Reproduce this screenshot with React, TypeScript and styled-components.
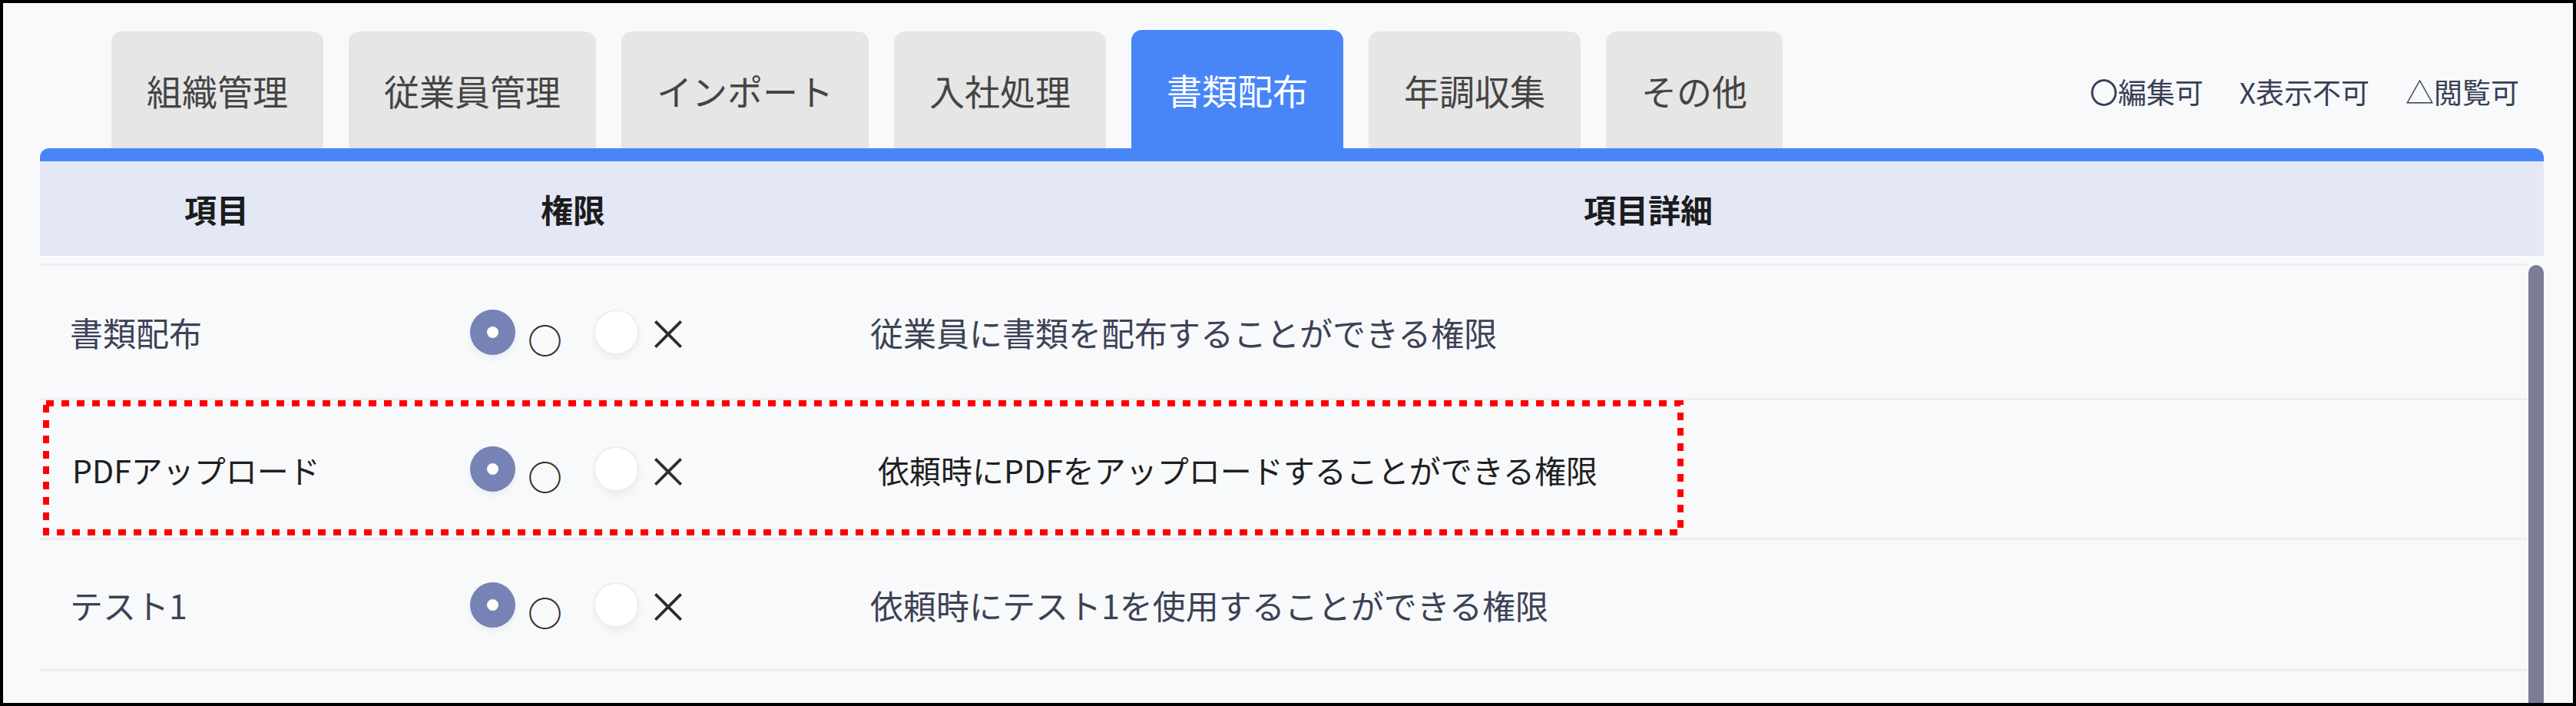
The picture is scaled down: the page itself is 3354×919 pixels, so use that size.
import * as React from 'react';
import styled, { createGlobalStyle } from 'styled-components';

const GlobalStyle = createGlobalStyle`
  html, body {
    margin: 0;
    padding: 0;
    background: #ffffff;
  }
  body {
    font-family: "Noto Sans CJK JP", "Noto Sans", sans-serif;
  }
`;

const Frame = styled.div`
  width: 3354px;
  height: 919px;
  box-sizing: border-box;
  border: 4px solid #000;
  background: #f8f9fb;
  padding: 35px 38px 0 48px;
  display: flex;
  flex-direction: column;
  overflow: hidden;
`;

const TopRow = styled.div`
  display: flex;
  align-items: flex-end;
  height: 154px;
  flex-shrink: 0;
`;

const TabList = styled.div`
  display: flex;
  align-items: flex-end;
  gap: 33px;
  margin-left: 93px;
  height: 100%;
`;

const Tab = styled.div<{ $active?: boolean }>`
  height: ${(p) => (p.$active ? 154 : 152)}px;
  padding: 0 46px;
  display: flex;
  align-items: center;
  justify-content: center;
  border-radius: 14px 14px 0 0;
  background: ${(p) => (p.$active ? '#4886f8' : '#e6e6e6')};
  color: ${(p) => (p.$active ? '#ffffff' : '#444444')};
  font-size: 46px;
  white-space: nowrap;
`;

const Legend = styled.div`
  margin-left: auto;
  margin-right: 32px;
  align-self: center;
  padding-top: 6px;
  display: flex;
  gap: 47px;
  font-size: 37px;
  color: #3a3f55;
  white-space: nowrap;
`;

const HeaderBar = styled.div`
  flex-shrink: 0;
  height: 140px;
  box-sizing: border-box;
  border-top: 17px solid #4886f8;
  border-radius: 12px 12px 0 0;
  background: #e4e8f6;
  display: grid;
  grid-template-columns: 460px 468px 1fr;
  align-items: center;
  text-align: center;
  font-size: 42px;
  font-weight: 700;
  color: #1c1c1c;
`;

const Body = styled.div`
  flex: 1;
  min-height: 0;
  margin-top: 10px;
  display: flex;
`;

const Rows = styled.div`
  flex: 1;
  display: flex;
  flex-direction: column;
`;

const Row = styled.div<{ $h: number }>`
  position: relative;
  height: ${(p) => p.$h}px;
  box-sizing: border-box;
  border-top: 3px solid #ecedf0;
  display: grid;
  grid-template-columns: 560px 521px 1fr;
  align-items: center;
  &:last-child {
    border-bottom: 3px solid #ecedf0;
  }
`;

const NameCell = styled.div<{ $edited?: boolean }>`
  padding-left: ${(p) => (p.$edited ? 42 : 39)}px;
  font-size: ${(p) => (p.$edited ? 41 : 43)}px;
  color: ${(p) => (p.$edited ? '#1f1f22' : '#3d4255')};
  white-space: nowrap;
`;

const PermCell = styled.div`
  display: flex;
  align-items: center;
`;

const Radio = styled.span<{ $checked?: boolean }>`
  position: relative;
  width: 59px;
  height: 59px;
  box-sizing: border-box;
  border-radius: 50%;
  background: ${(p) => (p.$checked ? '#7683b4' : '#ffffff')};
  border: ${(p) => (p.$checked ? 'none' : '2px solid #eeeeee')};
  box-shadow: 0 5px 10px rgba(0, 0, 0, 0.05);
  margin-left: ${(p) => (p.$checked ? 0 : 41)}px;
  &::after {
    content: '';
    display: ${(p) => (p.$checked ? 'block' : 'none')};
    position: absolute;
    left: 22px;
    top: 22px;
    width: 15px;
    height: 15px;
    border-radius: 50%;
    background: #ffffff;
  }
`;

const OptionLabel = styled.span<{ $shift: number }>`
  margin-left: 10px;
  margin-top: ${(p) => p.$shift}px;
  font-size: 56px;
  line-height: 1;
  color: #2e2e2e;
`;

const CircleMark = styled(OptionLabel)`
  margin-left: 16px;
  font-size: 45px;
  font-weight: 700;
  color: #333333;
`;

const DescCell = styled.div<{ $edited?: boolean }>`
  padding-left: ${(p) => (p.$edited ? 10 : 0)}px;
  font-size: ${(p) => (p.$edited ? 41 : 43)}px;
  color: ${(p) => (p.$edited ? '#1f1f22' : '#3d4255')};
  white-space: nowrap;
`;

const Highlight = styled.svg`
  position: absolute;
  left: 4px;
  top: 0;
  width: 2136px;
  height: 176px;
  pointer-events: none;
`;

const Scrollbar = styled.div`
  width: 20px;
  margin-left: 2px;
  margin-top: 2px;
  background: #7b7c96;
  border-radius: 10px 10px 0 0;
`;

const tabs = ['組織管理', '従業員管理', 'インポート', '入社処理', '書類配布', '年調収集', 'その他'];

const rows = [
  { name: '書類配布', desc: '従業員に書類を配布することができる権限', h: 175 },
  { name: 'PDFアップロード', desc: '依頼時にPDFをアップロードすることができる権限', h: 182, edited: true },
  { name: 'テスト1', desc: '依頼時にテスト1を使用することができる権限', h: 174 },
];

export default function App() {
  return (
    <>
      <GlobalStyle />
      <Frame>
        <TopRow>
          <TabList>
            {tabs.map((t) => (
              <Tab key={t} $active={t === '書類配布'}>
                {t}
              </Tab>
            ))}
          </TabList>
          <Legend>
            <span>〇編集可</span>
            <span>X表示不可</span>
            <span>△閲覧可</span>
          </Legend>
        </TopRow>
        <HeaderBar>
          <div>項目</div>
          <div>権限</div>
          <div>項目詳細</div>
        </HeaderBar>
        <Body>
          <Rows>
            {rows.map((r) => (
              <Row key={r.name} $h={r.h}>
                <NameCell $edited={r.edited}>{r.name}</NameCell>
                <PermCell>
                  <Radio $checked />
                  <CircleMark $shift={18}>○</CircleMark>
                  <Radio />
                  <OptionLabel $shift={0}>×</OptionLabel>
                </PermCell>
                <DescCell $edited={r.edited}>{r.desc}</DescCell>
                {r.edited && (
                  <Highlight viewBox="0 0 2136 176">
                    <rect
                      x="4"
                      y="4"
                      width="2128"
                      height="168"
                      fill="none"
                      stroke="#ff0000"
                      strokeWidth="8"
                      strokeDasharray="10 10"
                    />
                  </Highlight>
                )}
              </Row>
            ))}
          </Rows>
          <Scrollbar />
        </Body>
      </Frame>
    </>
  );
}
